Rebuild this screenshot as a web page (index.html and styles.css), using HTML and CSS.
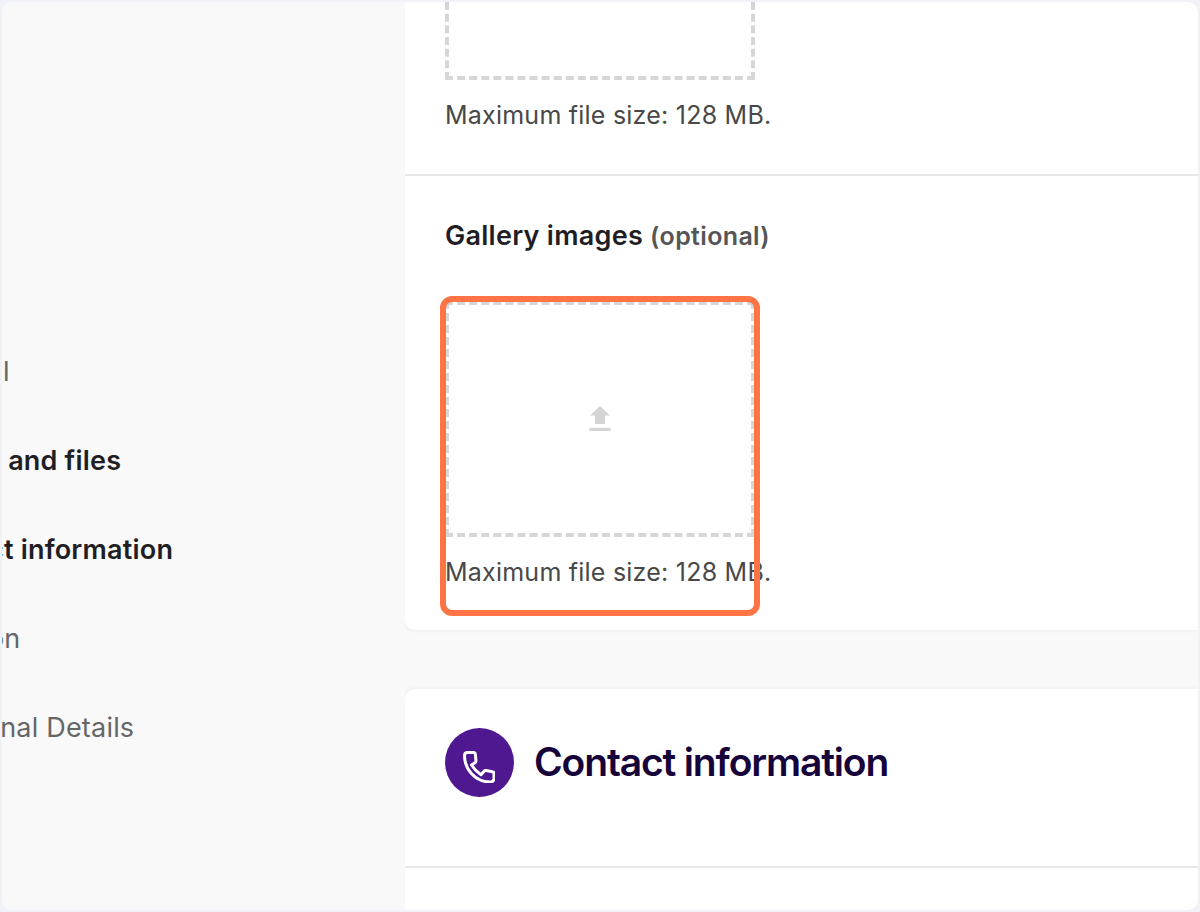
FILE: index.html
```html
<!DOCTYPE html>
<html lang="en">
<head>
<meta charset="utf-8">
<title>Gallery images</title>
<link rel="stylesheet" href="styles.css">
</head>
<body>
<div class="frame">
  <aside class="sidebar">
    <ul class="nav">
      <li class="nav-item">General</li>
      <li class="nav-item nav-item--done">Photos and files</li>
      <li class="nav-item nav-item--done">Contact information</li>
      <li class="nav-item">Location</li>
      <li class="nav-item">Additional Details</li>
    </ul>
  </aside>
  <main class="main">
    <section class="card card--media">
      <div class="field field--clipped">
        <div class="dropzone dropzone--clipped"></div>
        <p class="hint">Maximum file size: 128 MB.</p>
      </div>
      <div class="field field--gallery">
        <h3 class="label">Gallery images <span class="optional">(optional)</span></h3>
        <div class="upload">
          <div class="dropzone">
            <svg class="upload-icon" viewBox="0 0 22 26" aria-hidden="true">
              <path d="M11 0 21 9.500H16V18H6V9.500H1Z"/>
              <rect x="0.500" y="21.800" width="21" height="3.200"/>
            </svg>
          </div>
          <p class="hint">Maximum file size: 128 MB.</p>
          <div class="highlight"></div>
        </div>
      </div>
    </section>
    <section class="card card--contact">
      <header class="card-head">
        <span class="badge">
          <svg class="phone" viewBox="0 0 32 32" aria-hidden="true">
            <path d="M4.500 1.500H10.500Q12 1.500 12.300 3L13 10Q13 11 12 11.700L8.500 14C11 18 14 21 18 23.800L21 20.300Q21.800 19.400 23 19.600L29.500 20.800Q31 21 31 22.500V27Q31 31 27 31C12 31 1.500 18 1.500 4.500Q1.500 1.500 4.500 1.500Z"/>
          </svg>
        </span>
        <h2 class="card-title">Contact information</h2>
      </header>
      <div class="card-body"></div>
    </section>
  </main>
</div>
</body>
</html>
```

FILE: styles.css
```css
* {
  box-sizing: border-box;
}

html,
body {
  height: 100%;
  margin: 0;
}

body {
  background: #f1f1f8;
  font-family: Inter, "Liberation Sans", sans-serif;
  overflow: hidden;
}

.frame {
  display: flex;
  height: 908px;
  margin: 2px;
  background: #f9f9f9;
  border-radius: 10px;
  overflow: hidden;
}

.sidebar {
  flex: 0 0 403px;
  overflow: hidden;
}

.nav {
  list-style: none;
  margin: 353px 0 0 -93px;
  padding: 0;
  display: flex;
  flex-direction: column;
  gap: 55px;
}

.nav-item {
  font-size: 27px;
  line-height: 34px;
  letter-spacing: 0.2px;
  white-space: nowrap;
  color: #666;
}

.nav-item--done {
  font-weight: 600;
  color: #1e1e24;
}

.main {
  flex: 1;
  min-width: 0;
  overflow: hidden;
}

.card {
  background: #fff;
  box-shadow: 0 0 5px rgba(0, 0, 0, 0.07);
}

.card--media {
  height: 628px;
  border-radius: 0 0 0 10px;
}

.card--contact {
  margin-top: 59px;
  border-radius: 10px 0 0 0;
}

.field {
  padding: 0 40px;
}

.field--clipped {
  height: 174px;
  border-bottom: 2px solid #e8e8e8;
}

.field--gallery {
  padding-top: 43px;
}

.dropzone {
  display: flex;
  align-items: center;
  justify-content: center;
  width: 310px;
  height: 236px;
  border: 4px dashed #d6d6d6;
  border-radius: 2px;
}

.dropzone--clipped {
  height: 78px;
  border-top: 0;
  border-radius: 0 0 2px 2px;
}

.hint {
  margin: 18px 0 0;
  font-size: 25px;
  line-height: 34px;
  letter-spacing: 0.23px;
  white-space: nowrap;
  color: #484848;
}

.label {
  margin: 0;
  font-size: 27px;
  line-height: 34px;
  letter-spacing: 0.27px;
  font-weight: 600;
  color: #1e1e24;
}

.optional {
  font-size: 25px;
  letter-spacing: 0.35px;
  color: #555;
}

.upload {
  position: relative;
  width: 310px;
  margin-top: 48px;
}

.upload-icon {
  display: block;
  width: 22px;
  height: 26px;
  fill: #d4d4d4;
}

.highlight {
  position: absolute;
  top: -5px;
  left: -5px;
  width: 320px;
  height: 320px;
  border: 6px solid #ff7444;
  border-radius: 12px;
}

.card-head {
  display: flex;
  align-items: center;
  gap: 20px;
  height: 179px;
  padding: 0 40px 30px;
  border-bottom: 2px solid #e8e8e8;
}

.badge {
  display: flex;
  align-items: center;
  justify-content: center;
  width: 69px;
  height: 69px;
  border-radius: 50%;
  background: #4f1790;
}

.phone {
  width: 32px;
  height: 32px;
  margin: 8px 2px 0 0;
  fill: none;
  stroke: #fff;
  stroke-width: 3;
  stroke-linejoin: round;
}

.card-title {
  margin: 0 0 2px;
  font-size: 39px;
  line-height: 48px;
  font-weight: 600;
  letter-spacing: -1.15px;
  color: #16033a;
}

.card-body {
  height: 44px;
}
```
